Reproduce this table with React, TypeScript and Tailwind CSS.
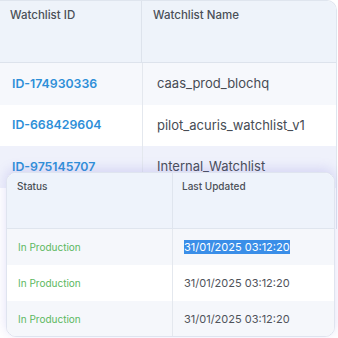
import React from "react";

const font = { fontFamily: "Inter, 'Noto Sans', sans-serif" };

const watchlists = [
  { id: "ID-174930336", name: "caas_prod_blochq", bg: "bg-[#f6f8fc]" },
  { id: "ID-668429604", name: "pilot_acuris_watchlist_v1", bg: "bg-white" },
  { id: "ID-975145707", name: "Internal_Watchlist", bg: "bg-[#eff1fb]" },
  { id: "ID-", name: "", bg: "bg-white" },
];

const statuses = [
  { bg: "bg-[#f5f7fb]", selected: true },
  { bg: "bg-white", selected: false },
  { bg: "bg-[#f5f7fb]", selected: false },
];

export default function App() {
  return (
    <div className="relative w-[338px] h-[338px] overflow-hidden bg-white" style={font}>
      {/* main watchlist table */}
      <div className="w-[337px] rounded-tr-[10px] border-r border-t border-[#dfe5ee] overflow-hidden">
        <div className="flex h-[62px] bg-[#eef3fa] border-b border-[#dde3ec]">
          <div className="w-[142px] border-r border-[#dde3ec] pl-[10px] pt-[6px] text-[11.5px] font-medium text-[#4a4f57]">
            Watchlist ID
          </div>
          <div className="flex-1 pl-[11px] pt-[6px] text-[11.5px] font-medium text-[#4a4f57]">
            Watchlist Name
          </div>
        </div>
        {watchlists.map((w, i) => (
          <div key={i} className={`flex h-[41.5px] items-center ${w.bg}`}>
            <div className="w-[143px] h-full flex items-center border-r border-[#e4e8ee] pl-[12px] text-[12.3px] font-semibold text-[#2e8fd8]">
              {w.id}
            </div>
            <div className="flex-1 pl-[14px] text-[13px] text-[#474c54]">{w.name}</div>
          </div>
        ))}
      </div>

      {/* status popover card */}
      <div className="absolute left-[6px] top-[172px] w-[329px] h-[165px] rounded-[10px] border border-[#dfe4ef] bg-white overflow-hidden shadow-[0_-3px_12px_rgba(120,110,220,0.22)]">
        <div className="flex h-[56px] bg-[#eef3fb] border-b border-[#dfe5ee]">
          <div className="w-[166px] border-r border-[#dfe5ee] pl-[10px] pt-[6px] text-[10px] font-medium text-[#4a4f57]">
            Status
          </div>
          <div className="flex-1 pl-[9px] pt-[6px] text-[10px] font-medium text-[#4a4f57]">
            Last Updated
          </div>
        </div>
        {statuses.map((s, i) => (
          <div key={i} className={`flex h-[36px] items-center ${s.bg}`}>
            <div className="w-[166px] h-full flex items-center border-r border-[#e4e8ee] pl-[11px] text-[10px] text-[#5cb860]">
              In Production
            </div>
            <div className="flex-1 pl-[11px] text-[11px] text-[#4f535a]">
              {s.selected ? (
                <span className="bg-[#3a8ee8] text-white">31/01/2025 03:12:20</span>
              ) : (
                "31/01/2025 03:12:20"
              )}
            </div>
          </div>
        ))}
      </div>
    </div>
  );
}
